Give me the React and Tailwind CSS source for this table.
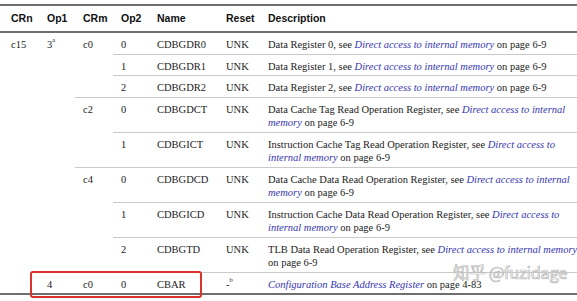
import React from "react";

const serif = "font-['Liberation_Serif','Times_New_Roman',serif]";
const sans = "font-['Liberation_Sans',Arial,sans-serif]";

const L = ({ children }) => (
  <span className="italic text-[#3535b0]">{children}</span>
);

const light = "border-b border-[#c9c9c9]";
const dark = "border-b-2 border-[#6f6f6f]";
const cell = "align-top pt-[5px] pb-[2px] leading-[13.5px] pl-[8px] whitespace-nowrap";

export default function App() {
  return (
    <div className="relative w-[577px] h-[301px] bg-white overflow-hidden pt-[4px]">
      <table className={`w-[577px] table-fixed border-collapse border-t-2 border-[#6f6f6f] text-[#1c1c1c] ${serif} text-[10.5px]`}>
        <colgroup>
          <col className="w-[39px]" />
          <col className="w-[36px]" />
          <col className="w-[38px]" />
          <col className="w-[36px]" />
          <col className="w-[69px]" />
          <col className="w-[42px]" />
          <col />
        </colgroup>
        <thead>
          <tr className={`${sans} font-bold text-[10.5px] text-[#111]`}>
            <th className={`text-left pl-[11px] h-[27px] ${dark}`}>CRn</th>
            <th className={`text-left pl-[8px] ${dark}`}>Op1</th>
            <th className={`text-left pl-[8px] ${dark}`}>CRm</th>
            <th className={`text-left pl-[8px] ${dark}`}>Op2</th>
            <th className={`text-left pl-[8px] ${dark}`}>Name</th>
            <th className={`text-left pl-[8px] ${dark}`}>Reset</th>
            <th className={`text-left pl-[8px] ${dark}`}>Description</th>
          </tr>
        </thead>
        <tbody>
          <tr>
            <td rowSpan={9} className={`${cell} pl-[11px] ${dark}`}>c15</td>
            <td rowSpan={8} className={`${cell} ${light}`}>
              3<sup className="text-[6.5px] align-[3px] leading-none">a</sup>
            </td>
            <td rowSpan={3} className={`${cell} ${light}`}>c0</td>
            <td className={`${cell} ${light}`}>0</td>
            <td className={`${cell} ${light}`}>CDBGDR0</td>
            <td className={`${cell} ${light}`}>UNK</td>
            <td className={`${cell} ${light}`}>
              Data Register 0, see <L>Direct access to internal memory</L> on page 6-9
            </td>
          </tr>
          <tr>
            <td className={`${cell} ${light}`}>1</td>
            <td className={`${cell} ${light}`}>CDBGDR1</td>
            <td className={`${cell} ${light}`}>UNK</td>
            <td className={`${cell} ${light}`}>
              Data Register 1, see <L>Direct access to internal memory</L> on page 6-9
            </td>
          </tr>
          <tr>
            <td className={`${cell} ${light}`}>2</td>
            <td className={`${cell} ${light}`}>CDBGDR2</td>
            <td className={`${cell} ${light}`}>UNK</td>
            <td className={`${cell} ${light}`}>
              Data Register 2, see <L>Direct access to internal memory</L> on page 6-9
            </td>
          </tr>
          <tr>
            <td rowSpan={2} className={`${cell} ${light}`}>c2</td>
            <td className={`${cell} ${light}`}>0</td>
            <td className={`${cell} ${light}`}>CDBGDCT</td>
            <td className={`${cell} ${light}`}>UNK</td>
            <td className={`${cell} ${light}`}>
              Data Cache Tag Read Operation Register, see <L>Direct access to internal</L>
              <br />
              <L>memory</L> on page 6-9
            </td>
          </tr>
          <tr>
            <td className={`${cell} ${light}`}>1</td>
            <td className={`${cell} ${light}`}>CDBGICT</td>
            <td className={`${cell} ${light}`}>UNK</td>
            <td className={`${cell} ${light}`}>
              Instruction Cache Tag Read Operation Register, see <L>Direct access to</L>
              <br />
              <L>internal memory</L> on page 6-9
            </td>
          </tr>
          <tr>
            <td rowSpan={3} className={`${cell} ${light}`}>c4</td>
            <td className={`${cell} ${light}`}>0</td>
            <td className={`${cell} ${light}`}>CDBGDCD</td>
            <td className={`${cell} ${light}`}>UNK</td>
            <td className={`${cell} ${light}`}>
              Data Cache Data Read Operation Register, see <L>Direct access to internal</L>
              <br />
              <L>memory</L> on page 6-9
            </td>
          </tr>
          <tr>
            <td className={`${cell} ${light}`}>1</td>
            <td className={`${cell} ${light}`}>CDBGICD</td>
            <td className={`${cell} ${light}`}>UNK</td>
            <td className={`${cell} ${light}`}>
              Instruction Cache Data Read Operation Register, see <L>Direct access to</L>
              <br />
              <L>internal memory</L> on page 6-9
            </td>
          </tr>
          <tr>
            <td className={`${cell} ${light}`}>2</td>
            <td className={`${cell} ${light}`}>CDBGTD</td>
            <td className={`${cell} ${light}`}>UNK</td>
            <td className={`${cell} ${light}`}>
              TLB Data Read Operation Register, see <L>Direct access to internal memory</L>
              <br />
              on page 6-9
            </td>
          </tr>
          <tr>
            <td className={`${cell} ${dark}`}>4</td>
            <td className={`${cell} ${dark}`}>c0</td>
            <td className={`${cell} ${dark}`}>0</td>
            <td className={`${cell} ${dark}`}>CBAR</td>
            <td className={`${cell} ${dark}`}>
              -<sup className="text-[6.5px] align-[2px] leading-none">b</sup>
            </td>
            <td className={`${cell} ${dark}`}>
              <L>Configuration Base Address Register</L> on page 4-83
            </td>
          </tr>
        </tbody>
      </table>

      <div className="absolute left-[30px] top-[271px] w-[172px] h-[27px] border-2 border-[#d8362c] rounded-[3px]" />

      <div
        className={`absolute left-[453px] top-[261px] text-[16.5px] leading-[22px] tracking-[-0.3px] text-white/60 [-webkit-text-stroke:0.7px_#b5b5b5] font-['Noto_Sans_CJK_SC','Noto_Sans',sans-serif] whitespace-nowrap`}
      >
        知乎 @fuzidage
      </div>
    </div>
  );
}
